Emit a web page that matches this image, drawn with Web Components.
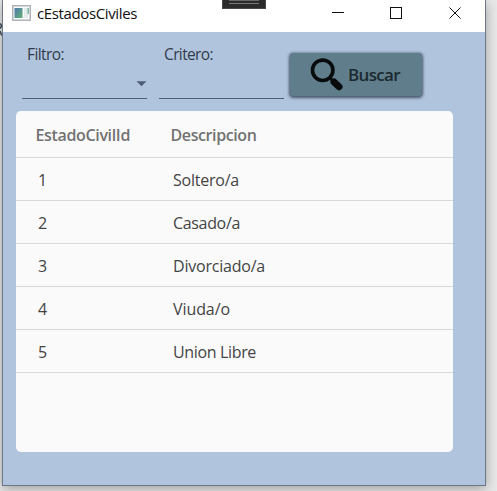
<!DOCTYPE html>
<html lang="es"><head><meta charset="utf-8"><title>cEstadosCiviles</title>
<style>
html,body{margin:0;height:491px;overflow:hidden;background:#e9e9e9}
body{font-family:"Open Sans","Noto Sans",sans-serif}
</style></head><body>
<app-window>
  <fit-text slot="title" width="100">cEstadosCiviles</fit-text>
  <filter-field width="125" gap="12" arrow><fit-text width="37">Filtro:</fit-text></filter-field>
  <filter-field width="125" gap="6"><fit-text width="49">Critero:</fit-text></filter-field>
  <search-button><fit-text width="52">Buscar</fit-text></search-button>
  <data-grid slot="grid">
    <grid-row head><fit-text width="94.5">EstadoCivilId</fit-text><fit-text slot="desc" width="86">Descripcion</fit-text></grid-row>
    <grid-row><fit-text width="9">1</fit-text><fit-text slot="desc" width="66">Soltero/a</fit-text></grid-row>
    <grid-row><fit-text width="9">2</fit-text><fit-text slot="desc" width="67">Casado/a</fit-text></grid-row>
    <grid-row><fit-text width="9">3</fit-text><fit-text slot="desc" width="92">Divorciado/a</fit-text></grid-row>
    <grid-row><fit-text width="9">4</fit-text><fit-text slot="desc" width="57">Viuda/o</fit-text></grid-row>
    <grid-row><fit-text width="9">5</fit-text><fit-text slot="desc" width="83">Union Libre</fit-text></grid-row>
  </data-grid>
</app-window>
<script>
const define = (name, html, setup) => customElements.define(name, class extends HTMLElement {
  connectedCallback() {
    if (this.shadowRoot) return;
    this.attachShadow({mode: 'open'}).innerHTML = html;
    if (setup) setup(this);
  }
});

define('app-window', `<style>
:host{display:block;box-sizing:border-box;position:relative;width:484px;height:486px;margin-left:2px;border:solid #6d7683;border-width:0 1px 1px;background:#b0c4de;box-shadow:0 3px 12px rgba(0,0,0,.32)}
header{height:32px;background:#fff;display:flex;align-items:center;color:#111;font-size:15px;line-height:20px}
.app{margin:0 6px 6px 9px;flex:none}
::slotted([slot=title]){margin-bottom:7px}
.controls{margin-left:auto;margin-right:24px;margin-bottom:6px;flex:none}
.filters{display:flex;height:79px;padding-left:19px;box-sizing:border-box}
.tab{position:absolute;left:219px;top:0;width:44px;height:9px;box-sizing:border-box;background:#2b2b2c;border:1px solid #484848;border-top:0}
.tab:before{content:"";position:absolute;left:6px;right:6px;top:0;height:2px;border-top:1px solid #666;border-bottom:1px solid #777}
.behind{position:absolute;left:-3px;top:22px}
</style>
<header>
<svg class="app" width="19" height="16" viewBox="0 0 19 16"><defs><linearGradient id="g" x2="1" y2="1"><stop stop-color="#4b78ad"/><stop offset="1" stop-color="#62b276"/></linearGradient></defs><rect x=".75" y=".75" width="17.5" height="14.5" fill="#f7f9fa" stroke="#a6abaf" stroke-width="1.3"/><rect x="2.5" y="3" width="8" height="10" fill="url(#g)"/><rect x="12" y="3" width="4" height="10" fill="#e4ebed"/><path d="M16.2 3v6" stroke="#5fa78e" stroke-width="1.2"/></svg>
<slot name="title"></slot>
<svg class="controls" width="130" height="14" viewBox="0 0 130 14" fill="none" stroke="#111"><path d="M1 6.5h12M59.5 1.500h11v11h-11z" shape-rendering="crispEdges"/><path d="M118.500 1.500l11 11M129.500 1.500l-11 11"/></svg>
</header>
<div class="filters"><slot></slot></div><slot name="grid"></slot><div class="tab"></div>
<svg class="behind" width="2" height="15" viewBox="0 0 2 15" fill="none" stroke="#39424f" stroke-width="1.500"><path d="M0 1.500q1.300 1 1.300 2.500t-1.300 2.500M0 9l1.800 4.500"/></svg>`);

define('filter-field', `<style>
:host{display:block;position:relative;height:67px;box-sizing:border-box;border-bottom:1px solid #505d72;flex:none;padding:12px 0 0 5px;color:#303a4a;font-size:15.5px;line-height:21px}
svg{position:absolute;right:0;top:49px}
</style><slot></slot>`, el => {
  el.style.width = el.getAttribute('width') + 'px';
  el.style.marginRight = el.getAttribute('gap') + 'px';
  if (el.hasAttribute('arrow')) el.shadowRoot.innerHTML += '<svg width="11" height="6" viewBox="0 0 11 6"><path d="M.5.300h10l-5 5z" fill="#4e5d75"/></svg>';
});

define('search-button', `<style>
:host{display:flex;box-sizing:border-box;align-items:center;width:132px;height:43px;margin-top:21px;padding:1px 0 0 20px;border-radius:4px;background:#607d8b;box-shadow:0 1px 3px .5px rgba(35,48,66,.75);color:#1b2930;font-size:17px;font-weight:600;line-height:22px}
svg{flex:none;margin-right:5px}
</style><svg width="33" height="34" viewBox="0 0 33 34" fill="none" stroke="#080b0c"><circle cx="12.700" cy="12.300" r="10.200" stroke-width="3.600"/><path d="M20 20l3.500 3.500" stroke-width="3"/><path d="M24 24l5 4.700" stroke-width="7" stroke-linecap="round"/></svg><slot></slot>`);

define('data-grid', `<style>
:host{display:block;width:437px;height:341px;margin-left:13px;background:#fafafa;border-radius:5px;overflow:hidden}
</style><slot></slot>`);

define('grid-row', `<style>
:host{display:grid;grid-template-columns:135px 1fr;align-items:center;box-sizing:border-box;height:43px;padding-left:22px;padding-top:2px;border-bottom:1px solid #d8d8d8;color:#444;font-size:16px;line-height:22px}
:host([head]){height:47px;padding-left:19.500px;color:#727272;font-weight:600}
</style><slot></slot><slot name="desc"></slot>`);

define('fit-text', `<style>
:host{display:block;white-space:nowrap}
span{display:inline-block}
</style><span><slot></slot></span>`, el => {
  const span = el.shadowRoot.querySelector('span');
  const spacing = (el.getAttribute('width') - span.getBoundingClientRect().width) / el.textContent.length;
  span.style.letterSpacing = spacing + 'px';
});
</script></body></html>
